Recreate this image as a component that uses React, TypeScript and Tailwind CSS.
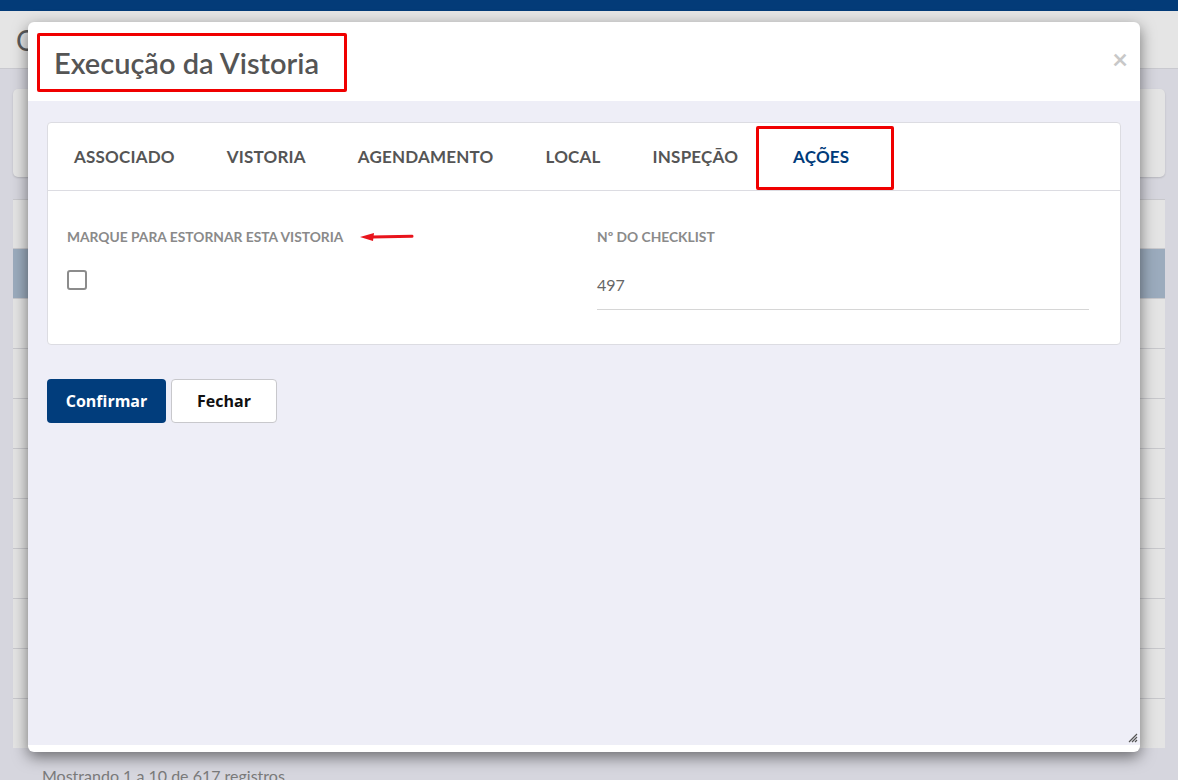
const tabs = ['ASSOCIADO', 'VISTORIA', 'AGENDAMENTO', 'LOCAL', 'INSPEÇÃO'];

function BackgroundPage() {
  const rows = Array.from({ length: 10 }, (_, i) => i);
  return (
    <div>
      <div className="h-[11px] bg-[#033b78]" />
      <div className="flex h-[58px] items-center border-b border-[#c9c9cf] bg-[#e5e5e5] pl-[16px] text-[28px] text-[#5a5a5a]">
        C
      </div>
      <div className="px-[13px] pt-[20px]">
        <div className="h-[88px] rounded-[5px] bg-[#e4e4e4] shadow-[0_1px_2px_rgba(0,0,0,0.15)]" />
        <div className="mt-[22px] bg-[#e4e4e4]">
          <div className="h-[49px] border-t border-[#c8c8cc]" />
          {rows.map((r) => (
            <div
              key={r}
              className={`h-[50px] border-t border-[#c8c8cc] ${r === 0 ? 'bg-[#9babbd]' : ''}`}
            />
          ))}
        </div>
        <p className="pl-[29px] pt-[16px] text-[16px] text-[#7a7a7a]">Mostrando 1 a 10 de 617 registros</p>
      </div>
    </div>
  );
}

function RedArrow() {
  return (
    <svg width="54" height="10" viewBox="0 0 54 10" className="ml-[17px]">
      <path d="M12 5 L52 4.2" stroke="#e8141c" strokeWidth="3" strokeLinecap="round" />
      <path d="M0 5 L14 1 L13 9 Z" fill="#e8141c" />
    </svg>
  );
}

export default function App() {
  return (
    <div className="relative h-[780px] w-[1178px] overflow-hidden bg-[#d6d6de] font-['Lato',sans-serif]">
      <BackgroundPage />

      <div className="absolute left-[28px] top-[22px] flex h-[730px] w-[1112px] flex-col overflow-hidden rounded-[6px] bg-white pb-[7px] shadow-[0_5px_15px_rgba(0,0,0,0.5)]">
        <div className="flex h-[79px] shrink-0 items-start justify-between pl-[9px] pr-[12px] pt-[11px]">
          <div className="flex h-[59px] w-[310px] items-center rounded-[2px] border-[3px] border-[#f00000] pl-[14px]">
            <h1 className="text-[29px] font-semibold text-[#555555]">Execução da Vistoria</h1>
          </div>
          <span className="mt-[12px] text-[27px] font-bold leading-none text-[#c8c8c8]">×</span>
        </div>

        <div className="relative flex-1 bg-[#eeeef7] px-[19px] pt-[21px]">
          <div className="h-[223px] rounded-[4px] border border-[#dcdce2] bg-white">
            <div className="relative flex h-[68px] items-center border-b border-[#dcdce2]">
              {tabs.map((t) => (
                <span key={t} className="px-[26px] text-[17px] font-bold tracking-[0.2px] text-[#555555]">
                  {t}
                </span>
              ))}
              <span className="relative ml-[3px] px-[26px] text-[17px] font-bold tracking-[0.2px] text-[#003b7a]">
                AÇÕES
                <span className="absolute left-[-11px] top-[-18px] h-[64px] w-[138px] rounded-[2px] border-[3px] border-[#f00000]" />
              </span>
            </div>

            <div className="grid grid-cols-[530px_492px] px-[19px] pt-[38px]">
              <div>
                <div className="flex h-[16px] items-center">
                  <span className="text-[13.8px] font-bold text-[#8a8a8a]">MARQUE PARA ESTORNAR ESTA VISTORIA</span>
                  <RedArrow />
                </div>
                <div className="mt-[25px] h-[20px] w-[20px] rounded-[3px] border-2 border-[#8c8c8c]" />
              </div>
              <div>
                <div className="flex h-[16px] items-center">
                  <span className="text-[13.8px] font-bold text-[#8a8a8a]">Nº DO CHECKLIST</span>
                </div>
                <div className="mt-[30px] border-b border-[#d6d6d6] pb-[14px] text-[16px] leading-[20px] text-[#666666]">
                  497
                </div>
              </div>
            </div>
          </div>

          <div className="mt-[34px] flex gap-[5px] font-['Open_Sans',sans-serif]">
            <button className="h-[44px] w-[119px] rounded-[4px] bg-[#013d7c] text-[16px] font-bold text-white">
              Confirmar
            </button>
            <button className="h-[44px] w-[106px] rounded-[4px] border border-[#c8c8cc] bg-white text-[16px] font-bold text-[#111111]">
              Fechar
            </button>
          </div>

          <svg width="10" height="10" viewBox="0 0 10 10" className="absolute bottom-[2px] right-[2px]">
            <path d="M9 1 L1 9 M9 4 L4 9 M9 7 L7 9" stroke="#555" strokeWidth="1.2" />
          </svg>
        </div>
      </div>
    </div>
  );
}
